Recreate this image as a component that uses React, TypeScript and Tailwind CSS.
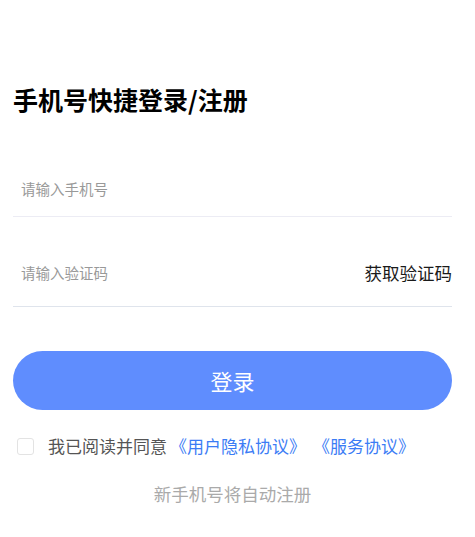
import { useState } from "react";

const FONT = '"Noto Sans CJK SC", "Noto Sans", sans-serif';

export default function App() {
  const [agreed, setAgreed] = useState(false);

  return (
    <div className="min-h-[537px] bg-white pl-[13px] pr-[23px]" style={{ fontFamily: FONT }}>
      {/* Title */}
      <h1 className="pt-[83px] text-[25px] font-bold leading-[32px] text-black">手机号快捷登录/注册</h1>

      {/* Phone input */}
      <div className="mt-[47px] flex h-[55px] items-center border-b border-[#ececf4]">
        <input
          className="w-full bg-transparent pl-[8px] text-[14.5px] text-[#333] outline-none placeholder:text-[#999]"
          placeholder="请输入手机号"
        />
      </div>

      {/* Code input */}
      <div className="mt-[23px] flex h-[67px] items-center border-b border-[#dfe4ec]">
        <input
          className="min-w-0 flex-1 bg-transparent pl-[8px] text-[14.5px] text-[#333] outline-none placeholder:text-[#999]"
          placeholder="请输入验证码"
        />
        <button className="shrink-0 text-[17.5px] text-[#1a1a1a]">获取验证码</button>
      </div>

      {/* Login button */}
      <button className="mt-[44px] flex h-[59px] w-full items-center justify-center rounded-full bg-[#5f8dfe] text-[22px] text-white">
        登录
      </button>

      {/* Agreement */}
      <div className="mt-[24px] flex items-center">
        <button
          onClick={() => setAgreed(!agreed)}
          className={`ml-[4px] h-[17px] w-[17px] shrink-0 rounded-[3px] border ${
            agreed ? "border-[#5f8dfe] bg-[#5f8dfe]" : "border-[#e3e3e3] bg-white"
          }`}
        />
        <p className="ml-[14px] flex whitespace-nowrap text-[17px] leading-[24px] text-[#555]">
          <span>我已阅读并同意</span>
          <span className="ml-[3px] text-[#3b7cf5]">《用户隐私协议》</span>
          <span className="ml-[7px] text-[#3b7cf5]">《服务协议》</span>
        </p>
      </div>

      <p className="mt-[24px] text-center text-[17.5px] leading-[24px] text-[#aaa]">新手机号将自动注册</p>
    </div>
  );
}
